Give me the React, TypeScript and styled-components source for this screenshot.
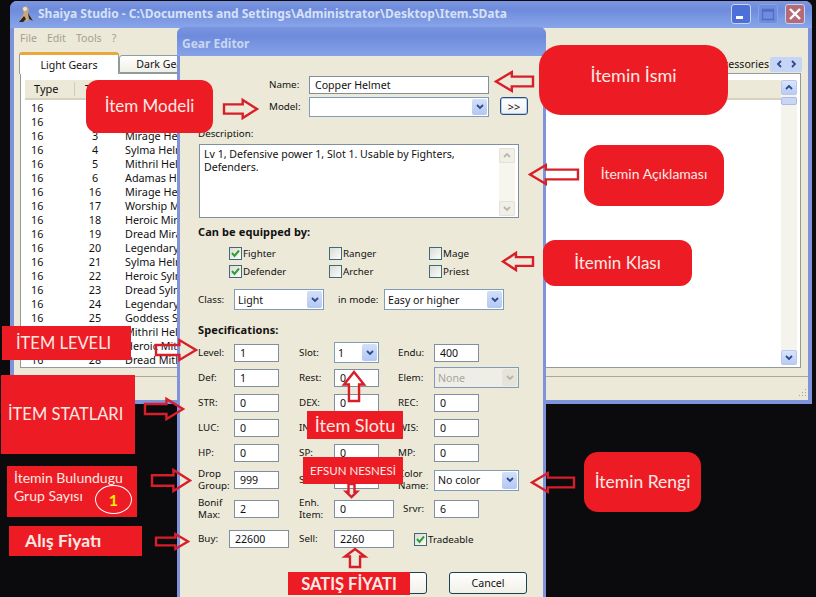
import React from "react";
import styled, { createGlobalStyle } from "styled-components";

const Global = createGlobalStyle`
  html, body { margin: 0; padding: 0; background: #0b0b0d; overflow: hidden; }
  #root { width: 816px; height: 597px; }
  * { box-sizing: border-box; }
`;

const Desktop = styled.div`
  position: relative;
  width: 816px;
  height: 597px;
  overflow: hidden;
  background: #0b0b0d;
  font-family: "Noto Sans", sans-serif;
  font-size: 10.6px;
  color: #111;
`;

/* ---- main window ---- */
const MainWindow = styled.div`
  position: absolute;
  z-index: 0;
  left: 10px;
  top: 1px;
  width: 802px;
  height: 403px;
  display: flex;
  flex-direction: column;
  background: #ece9d8;
  border: solid #7f93dc;
  border-width: 0 4px 4px 4px;
  border-radius: 7px 7px 0 0;
`;
const TitleBar = styled.div`
  height: 27px;
  margin: 0 -4px;
  flex: none;
  display: flex;
  align-items: center;
  padding: 0 7px 2px 7px;
  gap: 4px;
  border-radius: 7px 7px 0 0;
  background: linear-gradient(#7d97e0 0%, #6e8bdc 30%, #7f9ce4 75%, #88a6ea 100%);
`;
const TitleText = styled.span`
  font-weight: 700;
  font-size: 12px;
  color: #d7e1f6;
  white-space: nowrap;
  flex: 1;
`;
const WinBtn = styled.div<{ $kind: "min" | "max" | "close" }>`
  width: 20px;
  height: 20px;
  margin-left: 3px;
  border-radius: 3px;
  border: 1px solid ${(p) => (p.$kind === "max" ? "#8ba3e2" : "#c8d4f0")};
  background: ${(p) =>
    p.$kind === "close" ? "#b56a78" : p.$kind === "min" ? "#4c70d8" : "#6f8ddc"};
  display: flex;
  align-items: center;
  justify-content: center;
`;
const MenuBar = styled.div`
  height: 19px;
  flex: none;
  display: flex;
  align-items: center;
  gap: 10px;
  padding-left: 6px;
  color: #a29f92;
  font-size: 10.6px;
`;
const Tabs = styled.div`
  height: 26px;
  flex: none;
  display: flex;
  align-items: flex-end;
  padding: 0 0 0 5px;
  position: relative;
`;
const Tab = styled.div<{ $active?: boolean }>`
  height: ${(p) => (p.$active ? 22 : 18)}px;
  width: ${(p) => (p.$active ? 100 : 90)}px;
  margin-bottom: ${(p) => (p.$active ? -1 : 0)}px;
  position: relative;
  z-index: ${(p) => (p.$active ? 2 : 1)};
  display: flex;
  align-items: center;
  justify-content: center;
  background: ${(p) => (p.$active ? "#fff" : "linear-gradient(#fff, #f0efe6)")};
  border: 1px solid #919b9c;
  border-bottom: ${(p) => (p.$active ? "none" : "1px solid #919b9c")};
  border-top: ${(p) => (p.$active ? "3px solid #e8a83c" : "1px solid #919b9c")};
  border-radius: 3px 3px 0 0;
`;
const TabEnd = styled.div`
  position: absolute;
  right: 6px;
  bottom: 0;
  display: flex;
  align-items: center;
  height: 18px;
`;
const TabScroll = styled.div`
  width: 32px;
  height: 15px;
  margin-left: 1px;
  border-radius: 2px;
  background: #c6d5f6;
  display: flex;
  align-items: center;
  justify-content: space-around;
  padding: 0 3px;
`;
const Panel = styled.div`
  margin: 0 7px 0 6px;
  height: 295px;
  flex: none;
  background: #fff;
  border: 1px solid #919b9c;
  padding: 6px 3px 2px 4px;
  display: flex;
`;
const ListPane = styled.div`
  flex: 1;
  min-width: 0;
  display: flex;
  flex-direction: column;
  overflow: hidden;
`;
const ListHeader = styled.div`
  height: 20px;
  flex: none;
  background: #ece9d8;
  border-bottom: 2px solid #d6d2c2;
  display: grid;
  grid-template-columns: 41px 60px 1fr;
  align-items: center;
  padding-left: 9px;
  font-size: 11px;
`;
const HeadCell = styled.span<{ $inset?: number }>`
  border-right: 1px solid #cfccbc;
  height: 14px;
  line-height: 14px;
  padding-left: ${(p) => p.$inset ?? 0}px;
`;
const ListRow = styled.div`
  height: 14px;
  line-height: 14px;
  flex: none;
  display: grid;
  grid-template-columns: 34px 60px 1fr;
  padding-left: 6px;
  font-size: 10.8px;
  white-space: nowrap;
`;
const RowNum = styled.span`
  text-align: center;
`;
const RowsWrap = styled.div`
  padding-top: 1px;
  display: flex;
  flex-direction: column;
`;
const VScroll = styled.div`
  width: 16px;
  flex: none;
  display: flex;
  flex-direction: column;
  background: #f5f4ec;
  height: 285px;
`;
const ScrollBtn = styled.div<{ $pale?: boolean }>`
  width: 16px;
  height: 15px;
  flex: none;
  border-radius: 2px;
  border: 1px solid ${(p) => (p.$pale ? "#e4e2d8" : "#b9c8ee")};
  background: ${(p) => (p.$pale ? "#f1efe6" : "linear-gradient(#dbe5fa, #b8cbf5)")};
  display: flex;
  align-items: center;
  justify-content: center;
`;
const ScrollThumb = styled.div`
  height: 8px;
  margin-top: 2px;
  background: #c9d6f5;
  border: 1px solid #a9bbe6;
  border-radius: 2px;
`;
const ScrollGap = styled.div`
  flex: 1;
`;
const StatusBar = styled.div`
  flex: 1;
  margin-top: 8px;
  border-top: 1px solid #aca899;
  position: relative;
`;
const Grip = styled.svg`
  position: absolute;
  right: 1px;
  bottom: 1px;
`;

/* ---- dialog ---- */
const Dialog = styled.div`
  position: absolute;
  z-index: 1;
  left: 177px;
  top: 27px;
  width: 369px;
  height: 590px;
  background: #ece9d8;
  border: solid #7f93dc;
  border-width: 0 3px;
  border-radius: 7px 7px 0 0;
`;
const DialogTitle = styled.div`
  height: 29px;
  margin: 0 -3px;
  padding: 3px 0 0 5px;
  display: flex;
  align-items: center;
  border-radius: 7px 7px 0 0;
  background: linear-gradient(#7a94df, #6e8bdc 30%, #86a2e6);
  font-weight: 700;
  font-size: 12px;
  color: #c9d6f2;
`;
const DialogBody = styled.div`
  padding: 20px 0 0 18px;
`;
const NameGrid = styled.div`
  display: grid;
  grid-template-columns: 71px 40px 180px 11px 28px;
  grid-auto-rows: 18px 20px;
  row-gap: 3px;
  align-items: center;
`;
const Label = styled.span<{ $col?: number; $inset?: number }>`
  grid-column: ${(p) => p.$col ?? "auto"};
  font-size: 9.8px;
  line-height: 12px;
  white-space: nowrap;
  padding-left: ${(p) => p.$inset ?? 0}px;
`;
const Input = styled.div<{ $w?: number; $col?: number }>`
  grid-column: ${(p) => p.$col ?? "auto"};
  width: ${(p) => (p.$w ? `${p.$w}px` : "100%")};
  height: 18px;
  background: #fff;
  border: 1px solid #7f8f9f;
  padding: 0 5px;
  font-size: 10.6px;
  line-height: 16px;
  white-space: nowrap;
  overflow: hidden;
`;
const SelectBox = styled.div<{ $w?: number; $h?: number; $col?: number; $off?: boolean }>`
  grid-column: ${(p) => p.$col ?? "auto"};
  width: ${(p) => (p.$w ? `${p.$w}px` : "100%")};
  height: ${(p) => p.$h ?? 21}px;
  background: ${(p) => (p.$off ? "#efeee6" : "#fff")};
  color: ${(p) => (p.$off ? "#a7a596" : "#111")};
  border: 1px solid #7f9db9;
  display: flex;
  align-items: center;
  justify-content: space-between;
  padding: 0 1px 0 3px;
  font-size: 10.6px;
`;
const SelectArrow = styled.div<{ $off?: boolean }>`
  width: 15px;
  height: calc(100% - 2px);
  border-radius: 2px;
  background: ${(p) => (p.$off ? "#e6e4da" : "linear-gradient(#d4e0f8, #b3c7f3)")};
  display: flex;
  align-items: center;
  justify-content: center;
`;
const MiniButton = styled.div`
  grid-column: 5;
  width: 28px;
  height: 18px;
  align-self: start;
  background: linear-gradient(#fff, #eef0f2);
  border: 1px solid #2a4f7e;
  box-shadow: inset 0 0 0 1px #b7cbee;
  border-radius: 3px;
  display: flex;
  align-items: center;
  justify-content: center;
  font-size: 11px;
`;
const FieldCaption = styled.div<{ $top: number }>`
  margin-top: ${(p) => p.$top}px;
  font-size: 9.8px;
  line-height: 12px;
`;
const SectionTitle = styled.div<{ $top: number }>`
  margin-top: ${(p) => p.$top}px;
  font-size: 11px;
  line-height: 12px;
  font-weight: 700;
  letter-spacing: 0.1px;
`;
const TextArea = styled.div`
  margin: 4px 0 0 1px;
  width: 320px;
  height: 74px;
  background: #fff;
  border: 1px solid #7f8f9f;
  padding: 3px 3px 0 4px;
  display: flex;
  justify-content: space-between;
  font-size: 10.6px;
  line-height: 13px;
`;
const DescText = styled.div`
  width: 290px;
`;
const PaleScroll = styled.div`
  width: 16px;
  display: flex;
  flex-direction: column;
  justify-content: space-between;
  height: 68px;
  flex: none;
  background: #f6f5ee;
`;
const CheckGrid = styled.div`
  display: grid;
  grid-template-columns: 100px 100px 100px;
  grid-auto-rows: 18px;
  margin: 6px 0 0 31px;
  align-items: center;
`;
const CheckItem = styled.div`
  display: flex;
  align-items: center;
  gap: 1px;
  font-size: 9.8px;
`;
const Box = styled.div`
  width: 13px;
  height: 13px;
  flex: none;
  border: 1px solid #3f6a7a;
  background: linear-gradient(135deg, #dcdcd6, #fbfbf8);
  display: flex;
  align-items: center;
  justify-content: center;
`;
const ClassRow = styled.div`
  display: grid;
  grid-template-columns: 36px 90px 14px 46px 120px;
  margin-top: 9px;
  align-items: center;
`;
const SpecRow = styled.div<{ $h: number; $cols?: string }>`
  display: grid;
  height: ${(p) => p.$h}px;
  grid-template-columns: ${(p) => p.$cols ?? "36px 45px 20px 35px 45px 19px 36px 85px"};
  align-items: center;
`;
const SpecWrap = styled.div`
  margin-top: 4px;
`;
const ButtonRow = styled.div`
  margin: 17px 0 0 0;
  display: flex;
  justify-content: flex-end;
  gap: 22px;
  padding-right: 16px;
`;
const PushButton = styled.div`
  width: 78px;
  height: 22px;
  background: linear-gradient(#fff, #f1f0e8);
  border: 1px solid #1c3f55;
  border-radius: 3px;
  display: flex;
  align-items: center;
  justify-content: center;
  font-size: 10.6px;
`;

/* ---- annotations ---- */
const Layer = styled.div`
  position: absolute;
  inset: 0;
  z-index: 2;
`;
const Callout = styled.div<{
  $x: number; $y: number; $w: number; $h: number; $r?: number; $size?: number; $bold?: boolean; $left?: number; $up?: number;
}>`
  position: absolute;
  left: ${(p) => p.$x}px;
  top: ${(p) => p.$y}px;
  width: ${(p) => p.$w}px;
  height: ${(p) => p.$h}px;
  background: #ed1c24;
  border-radius: ${(p) => p.$r ?? 0}px;
  color: #fbe9e4;
  font-family: Lato, "Open Sans", sans-serif;
  font-size: ${(p) => p.$size ?? 17}px;
  font-weight: ${(p) => (p.$bold ? 700 : 400)};
  display: flex;
  align-items: center;
  justify-content: ${(p) => (p.$left !== undefined ? "flex-start" : "center")};
  padding-left: ${(p) => p.$left ?? 0}px;
  padding-bottom: ${(p) => p.$up ?? 0}px;
  white-space: nowrap;
`;
const GroupText = styled.div`
  font-size: 14px;
  line-height: 18px;
  align-self: flex-start;
  margin-top: 3px;
`;
const Badge = styled.div`
  position: absolute;
  left: 88px;
  top: 19px;
  width: 37px;
  height: 29px;
  border: 1px solid #fff;
  border-radius: 50%;
  color: #ffe600;
  font-weight: 700;
  font-size: 16px;
  display: flex;
  align-items: center;
  justify-content: center;
`;
const ArrowSvg = styled.svg<{ $x: number; $y: number }>`
  position: absolute;
  left: ${(p) => p.$x}px;
  top: ${(p) => p.$y}px;
  overflow: visible;
`;

const Arrow = ({ x, y, w, h, dir }: { x: number; y: number; w: number; h: number; dir: "l" | "r" | "u" | "d" }) => {
  const horizontal = dir === "l" || dir === "r";
  const len = horizontal ? w : h;
  const wid = horizontal ? h : w;
  const head = Math.min(len * 0.45, wid * 0.8);
  const a = wid * 0.27;
  const b = wid * 0.73;
  const base: [number, number][] = [
    [0, a], [len - head, a], [len - head, 1], [len - 1, wid / 2], [len - head, wid - 1], [len - head, b], [0, b],
  ];
  const map = (p: [number, number]): [number, number] => {
    if (dir === "r") return p;
    if (dir === "l") return [len - p[0], p[1]];
    if (dir === "d") return [p[1], p[0]];
    return [p[1], len - p[0]];
  };
  const pts = base.map(map).map((p) => p.join(",")).join(" ");
  return (
    <ArrowSvg $x={x} $y={y} width={w} height={h} viewBox={`0 0 ${w} ${h}`}>
      <polygon points={pts} fill="none" stroke="#d81e28" strokeWidth="2.4" />
    </ArrowSvg>
  );
};

const Chevron = ({ dir = "d", color = "#2c4a8e" }: { dir?: "d" | "u" | "l" | "r"; color?: string }) => {
  const d = { d: "M1 2l3 3 3-3", u: "M1 5l3-3 3 3", l: "M5 1L2 4l3 3", r: "M3 1l3 3-3 3" }[dir];
  return (
    <svg width="8" height="8" viewBox="0 0 8 8">
      <path d={d} fill="none" stroke={color} strokeWidth="1.8" />
    </svg>
  );
};

const Select = ({ text, w, h, col, off }: { text?: string; w?: number; h?: number; col?: number; off?: boolean }) => (
  <SelectBox $w={w} $h={h} $col={col} $off={off}>
    <span>{text}</span>
    <SelectArrow $off={off}>
      <Chevron color={off ? "#b5b3a8" : "#2c4a8e"} />
    </SelectArrow>
  </SelectBox>
);

const Check = ({ on, label }: { on?: boolean; label: string }) => (
  <CheckItem>
    <Box>
      {on && (
        <svg width="11" height="11" viewBox="0 0 11 11">
          <path d="M2 5l2.5 3L9 2.5" fill="none" stroke="#2f9e3a" strokeWidth="2" />
        </svg>
      )}
    </Box>
    {label}
  </CheckItem>
);

const rows: [string, string, string][] = [
  ["16", "1", "Copper Helmet"],
  ["16", "2", "Iron Helmet"],
  ["16", "3", "Mirage Helmet"],
  ["16", "4", "Sylma Helmet"],
  ["16", "5", "Mithril Helmet"],
  ["16", "6", "Adamas Helmet"],
  ["16", "16", "Mirage Helmet"],
  ["16", "17", "Worship Mirage"],
  ["16", "18", "Heroic Mirage"],
  ["16", "19", "Dread Mirage"],
  ["16", "20", "Legendary Helm"],
  ["16", "21", "Sylma Helmet"],
  ["16", "22", "Heroic Sylma"],
  ["16", "23", "Dread Sylma"],
  ["16", "24", "Legendary Helm"],
  ["16", "25", "Goddess Sylma"],
  ["16", "26", "Mithril Helmet"],
  ["16", "27", "Heroic Mithril"],
  ["16", "28", "Dread Mithril"],
];

export default function App() {
  return (
    <Desktop>
      <Global />
      <MainWindow>
        <TitleBar>
          <svg width="17" height="18" viewBox="0 0 17 18">
            <path d="M2 17L7 8 5 3l4-2 3 3-1 4 5 8-4-2-3 3-3-3z" fill="#c9a877" />
            <path d="M2 17l5-6 2 3-3 3zM11 8l5 8-4-2z" fill="#2b2622" />
            <circle cx="8" cy="4" r="2" fill="#efe3cf" />
          </svg>
          <TitleText>Shaiya Studio - C:\Documents and Settings\Administrator\Desktop\Item.SData</TitleText>
          <WinBtn $kind="min">
            <svg width="12" height="12" viewBox="0 0 12 12"><rect x="1" y="8" width="7" height="3" fill="#fff" /></svg>
          </WinBtn>
          <WinBtn $kind="max">
            <svg width="14" height="14" viewBox="0 0 14 14"><path d="M1.5 2.5h11v10h-11zM1.5 4h11" fill="none" stroke="#4f6ec8" strokeWidth="1.3" /></svg>
          </WinBtn>
          <WinBtn $kind="close">
            <svg width="14" height="14" viewBox="0 0 14 14"><path d="M2 2l10 10M12 2L2 12" stroke="#fff" strokeWidth="2.4" /></svg>
          </WinBtn>
        </TitleBar>
        <MenuBar>
          <span>File</span><span>Edit</span><span>Tools</span><span>?</span>
        </MenuBar>
        <Tabs>
          <Tab $active>Light Gears</Tab>
          <Tab>Dark Gears</Tab>
          <TabEnd>
            Accessories
            <TabScroll>
              <Chevron dir="l" />
              <Chevron dir="r" />
            </TabScroll>
          </TabEnd>
        </Tabs>
        <Panel>
          <ListPane>
            <ListHeader>
              <HeadCell>Type</HeadCell>
              <HeadCell $inset={10}>Type ID</HeadCell>
              <span />
            </ListHeader>
            <RowsWrap>
              {rows.map((r, i) => (
                <ListRow key={i}>
                  <span>{r[0]}</span>
                  <RowNum>{r[1]}</RowNum>
                  <span>{r[2]}</span>
                </ListRow>
              ))}
            </RowsWrap>
          </ListPane>
          <VScroll>
            <ScrollBtn><Chevron dir="u" /></ScrollBtn>
            <ScrollThumb />
            <ScrollGap />
            <ScrollBtn><Chevron /></ScrollBtn>
          </VScroll>
        </Panel>
        <StatusBar>
          <Grip width="12" height="12" viewBox="0 0 12 12">
            <path d="M10 2h1v1h-1zM7 5h1v1H7zM10 5h1v1h-1zM4 8h1v1H4zM7 8h1v1H7zM10 8h1v1h-1z" fill="#a6a392" />
          </Grip>
        </StatusBar>
      </MainWindow>

      <Dialog>
        <DialogTitle>Gear Editor</DialogTitle>
        <DialogBody>
          <NameGrid>
            <Label $col={2}>Name:</Label>
            <Input $col={3}>Copper Helmet</Input>
            <Label $col={2}>Model:</Label>
            <Select col={3} h={20} />
            <MiniButton>&gt;&gt;</MiniButton>
          </NameGrid>
          <FieldCaption $top={11}>Description:</FieldCaption>
          <TextArea>
            <DescText>Lv 1, Defensive power 1, Slot 1. Usable by Fighters, Defenders.</DescText>
            <PaleScroll>
              <ScrollBtn $pale><Chevron dir="u" color="#b9b8ad" /></ScrollBtn>
              <ScrollBtn $pale><Chevron color="#b9b8ad" /></ScrollBtn>
            </PaleScroll>
          </TextArea>
          <SectionTitle $top={8}>Can be equipped by:</SectionTitle>
          <CheckGrid>
            <Check on label="Fighter" />
            <Check label="Ranger" />
            <Check label="Mage" />
            <Check on label="Defender" />
            <Check label="Archer" />
            <Check label="Priest" />
          </CheckGrid>
          <ClassRow>
            <Label>Class:</Label>
            <Select text="Light" />
            <span />
            <Label>in mode:</Label>
            <Select text="Easy or higher" />
          </ClassRow>
          <SectionTitle $top={14}>Specifications:</SectionTitle>
          <SpecWrap>
            <SpecRow $h={25}>
              <Label>Level:</Label><Input>1</Input>
              <Label $col={4}>Slot:</Label><Select text="1" />
              <Label $col={7}>Endu:</Label><Input $w={45}>400</Input>
            </SpecRow>
            <SpecRow $h={25}>
              <Label>Def:</Label><Input>1</Input>
              <Label $col={4}>Rest:</Label><Input>0</Input>
              <Label $col={7}>Elem:</Label><Select text="None" off />
            </SpecRow>
            <SpecRow $h={25}>
              <Label>STR:</Label><Input>0</Input>
              <Label $col={4}>DEX:</Label><Input>0</Input>
              <Label $col={7}>REC:</Label><Input $w={45}>0</Input>
            </SpecRow>
            <SpecRow $h={25}>
              <Label>LUC:</Label><Input>0</Input>
              <Label $col={4}>INT:</Label><Input>0</Input>
              <Label $col={7}>WIS:</Label><Input $w={45}>0</Input>
            </SpecRow>
            <SpecRow $h={25}>
              <Label>HP:</Label><Input>0</Input>
              <Label $col={4}>SP:</Label><Input>0</Input>
              <Label $col={7}>MP:</Label><Input $w={45}>0</Input>
            </SpecRow>
            <SpecRow $h={30}>
              <Label>Drop<br />Group:</Label><Input>999</Input>
              <Label $col={4}>Set:</Label><Input>0</Input>
              <Label $col={7}>Color<br />Name:</Label><Select text="No color" />
            </SpecRow>
            <SpecRow $h={28}>
              <Label>Bonif<br />Max:</Label><Input>2</Input>
              <Label $col={4}>Enh.<br />Item:</Label><Input $w={60}>0</Input>
              <Label $col={7} $inset={5}>Srvr:</Label><Input $w={45}>6</Input>
            </SpecRow>
            <SpecRow $h={32} $cols="31px 60px 10px 35px 60px 20px 100px">
              <Label>Buy:</Label><Input>22600</Input>
              <Label $col={4}>Sell:</Label><Input>2260</Input>
              <span />
              <Check on label="Tradeable" />
            </SpecRow>
          </SpecWrap>
          <ButtonRow>
            <PushButton>OK</PushButton>
            <PushButton>Cancel</PushButton>
          </ButtonRow>
        </DialogBody>
      </Dialog>

      <Layer>
        <Callout $x={86} $y={80} $w={127} $h={53} $r={12} $up={2}>İtem Modeli</Callout>
        <Callout $x={539} $y={45} $w={189} $h={70} $r={22} $size={18} $up={10}>İtemin İsmi</Callout>
        <Callout $x={584} $y={145} $w={140} $h={61} $r={16} $size={14} $up={4}>İtemin Açıklaması</Callout>
        <Callout $x={543} $y={240} $w={149} $h={46} $r={12} $up={2}>İtemin Klası</Callout>
        <Callout $x={2} $y={326} $w={129} $h={34} $left={14} $size={16.5}>İTEM LEVELI</Callout>
        <Callout $x={1} $y={375} $w={134} $h={79} $left={7} $size={16.5} $up={2}>İTEM STATLARI</Callout>
        <Callout $x={7} $y={466} $w={130} $h={51} $left={7}>
          <GroupText>İtemin Bulundugu<br />Grup Sayısı</GroupText>
          <Badge>1</Badge>
        </Callout>
        <Callout $x={9} $y={526} $w={133} $h={30} $left={16} $bold $size={17.5} $up={2}>Alış Fiyatı</Callout>
        <Callout $x={307} $y={411} $w={96} $h={28} $size={18}>İtem Slotu</Callout>
        <Callout $x={303} $y={457} $w={100} $h={27} $size={11.5}>EFSUN NESNESİ</Callout>
        <Callout $x={288} $y={572} $w={122} $h={23} $size={16.5} $bold>SATIŞ FİYATI</Callout>
        <Callout $x={584} $y={452} $w={117} $h={60} $r={14} $up={2} $size={17.5}>İtemin Rengi</Callout>

        <Arrow x={224} y={99} w={34} h={20} dir="r" />
        <Arrow x={495} y={71} w={38} h={21} dir="l" />
        <Arrow x={529} y={164} w={49} h={21} dir="l" />
        <Arrow x={502} y={252} w={31} h={19} dir="l" />
        <Arrow x={156} y={339} w={41} h={22} dir="r" />
        <Arrow x={145} y={398} w={39} h={22} dir="r" />
        <Arrow x={152} y={469} w={39} h={23} dir="r" />
        <Arrow x={156} y={533} w={33} h={17} dir="r" />
        <Arrow x={531} y={472} w={43} h={21} dir="l" />
        <Arrow x={343} y={371} w={22} h={30} dir="u" />
        <Arrow x={345} y={484} w={13} h={14} dir="d" />
        <Arrow x={344} y={548} w={22} h={19} dir="u" />
      </Layer>
    </Desktop>
  );
}
